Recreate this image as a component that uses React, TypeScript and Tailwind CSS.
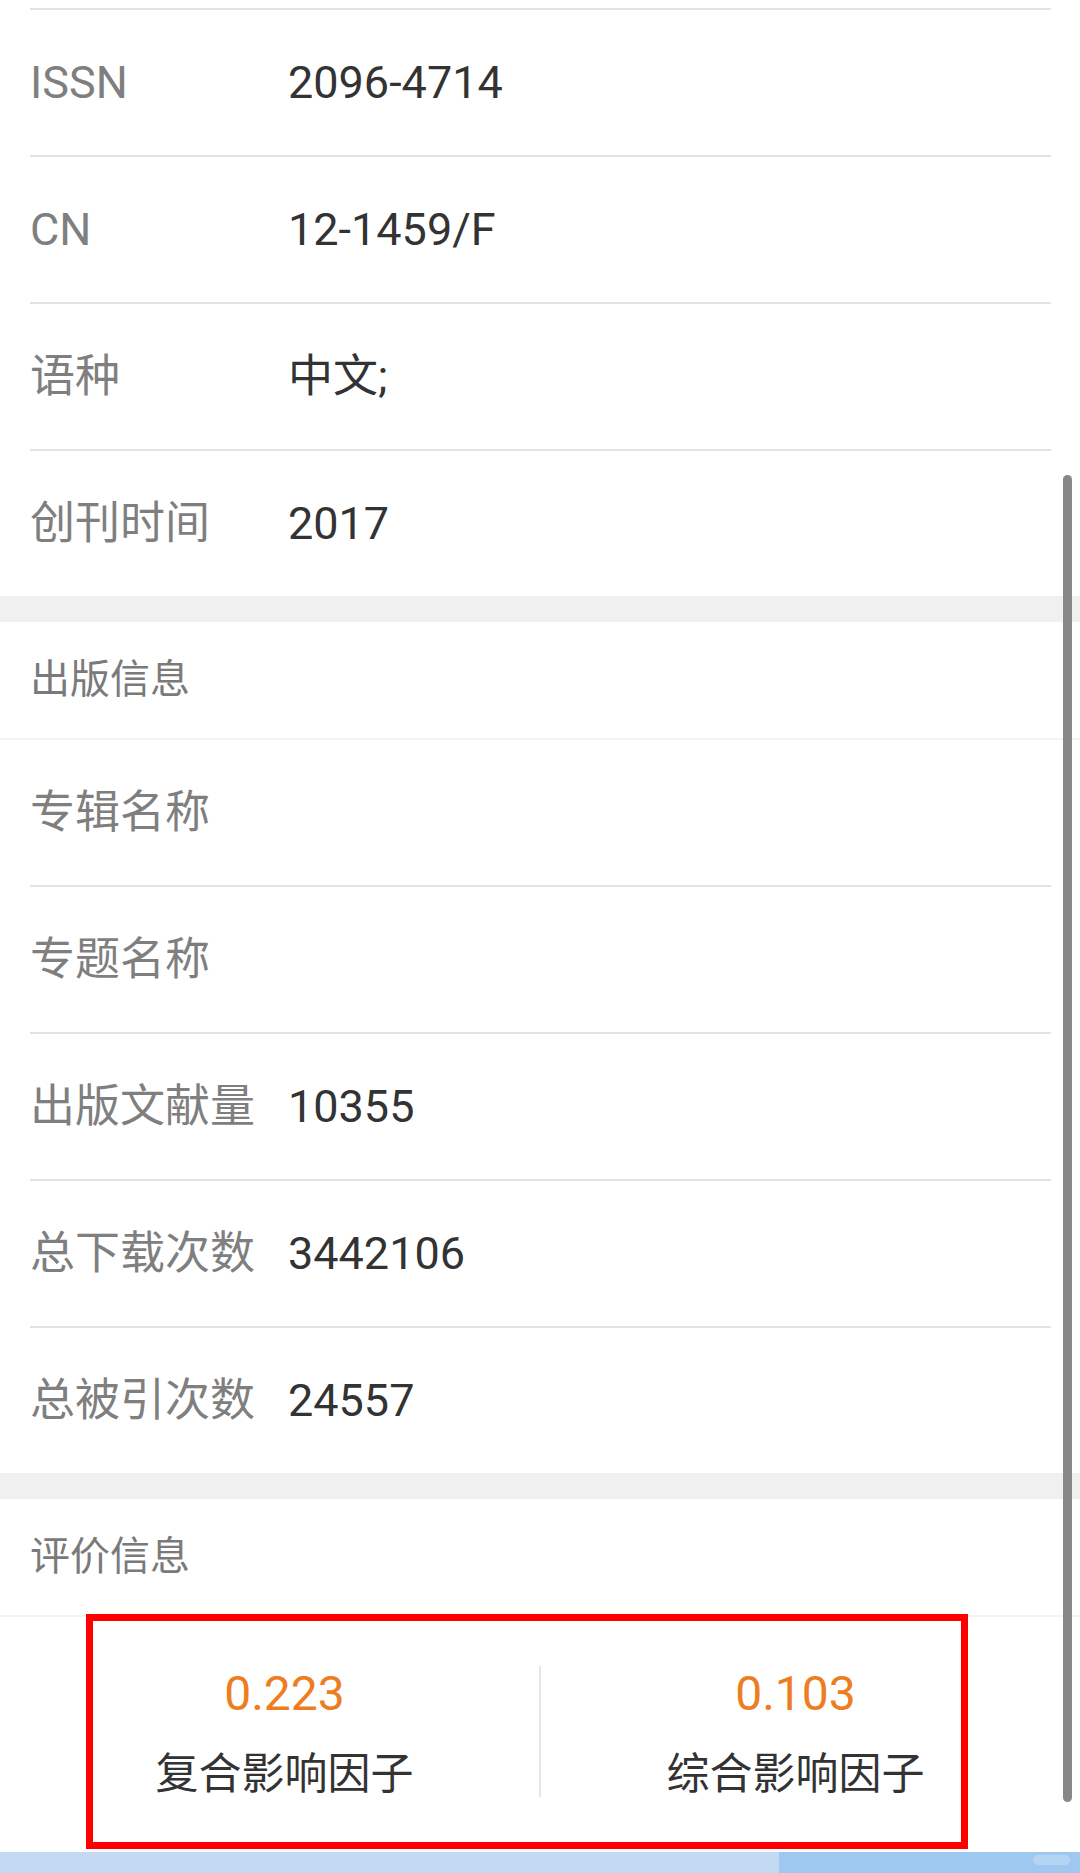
import React from "react";

const font = { fontFamily: 'Roboto, "Noto Sans CJK SC", sans-serif' };

function Row({ label, value, top = true }: { label: string; value?: string; top?: boolean }) {
  return (
    <div className={`flex h-[147px] items-center ${top ? "border-t-2 border-[#e2e2e2]" : ""}`}>
      <div className="w-[258px] shrink-0 text-[45px] leading-none text-[#7f7f7f]">{label}</div>
      <div className="text-[45px] leading-none text-[#333333]">{value}</div>
    </div>
  );
}

function Header({ title }: { title: string }) {
  return (
    <div className="flex h-[118px] items-center border-b-2 border-[#f3f3f3] px-[30px] text-[40px] leading-none text-[#7a7a7a]">
      {title}
    </div>
  );
}

function Band() {
  return <div className="h-[26px] bg-[#f0f0f0]" />;
}

export default function App() {
  return (
    <div className="relative h-[1873px] w-[1080px] overflow-hidden bg-white" style={font}>
      <div className="h-[8px]" />
      <div className="pl-[30px] pr-[29px]">
        <Row label="ISSN" value="2096-4714" />
        <Row label="CN" value="12-1459/F" />
        <Row label="语种" value="中文;" />
        <Row label="创刊时间" value="2017" />
      </div>
      <Band />
      <Header title="出版信息" />
      <div className="pl-[30px] pr-[29px]">
        <div className="flex h-[145px] items-center">
          <div className="text-[45px] leading-none text-[#7f7f7f]">专辑名称</div>
        </div>
        <Row label="专题名称" />
        <Row label="出版文献量" value="10355" />
        <Row label="总下载次数" value="3442106" />
        <Row label="总被引次数" value="24557" />
      </div>
      <Band />
      <Header title="评价信息" />
      <div className="flex h-[235px] items-start px-[30px] pt-[49px]">
        <div className="flex flex-1 flex-col items-center">
          <div className="text-[48px] leading-[56px] text-[#ed7d1f]">0.223</div>
          <div className="mt-[28px] text-[43px] leading-[48px] text-[#333333]">复合影响因子</div>
        </div>
        <div className="h-[131px] w-[2px] bg-[#e6e6e6]" />
        <div className="flex flex-1 flex-col items-center">
          <div className="text-[48px] leading-[56px] text-[#ed7d1f]">0.103</div>
          <div className="mt-[28px] text-[43px] leading-[48px] text-[#333333]">综合影响因子</div>
        </div>
      </div>
      <div className="relative flex h-[23px]">
        <div className="w-[779px] bg-[#c4daf2]" />
        <div className="flex-1 bg-[#9ec8f0]" />
        <div className="absolute left-[1033px] top-[3px] h-[10px] w-[37px] rounded-full bg-[#b3d4f3]" />
      </div>

      {/* scrollbar */}
      <div className="absolute left-[1063px] top-[475px] h-[1327px] w-[9px] rounded-full bg-[#888888]" />

      {/* red annotation box */}
      <div className="absolute left-[86px] top-[1614px] h-[235px] w-[882px] border-[7px] border-[#ff0000]" />
    </div>
  );
}
